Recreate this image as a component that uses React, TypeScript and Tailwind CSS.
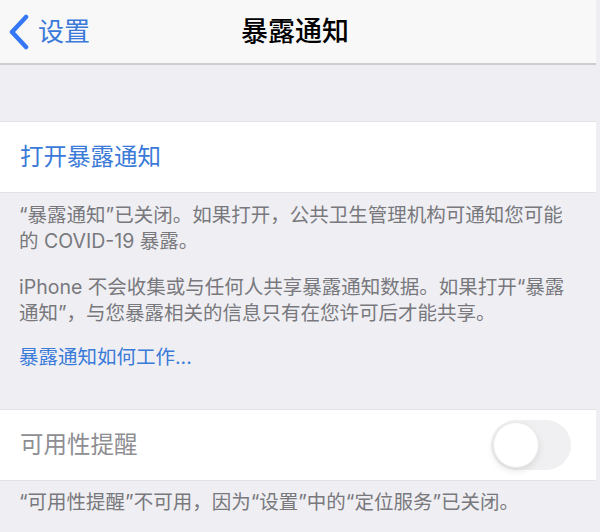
const font = {
  fontFamily: 'Inter, "Noto Sans CJK SC", sans-serif',
};

function BackChevron() {
  return (
    <svg width="22" height="36" viewBox="0 0 22 36" className="shrink-0">
      <path
        d="M18 3 L4 18 L18 33"
        fill="none"
        stroke="#3478f6"
        strokeWidth="4.5"
        strokeLinecap="round"
        strokeLinejoin="round"
      />
    </svg>
  );
}

function Toggle() {
  return (
    <div className="relative h-[50px] w-[80px] rounded-full bg-[#ededef] opacity-80">
      <div className="absolute left-[2px] top-[2px] h-[46px] w-[46px] rounded-full border border-[#e4e4e6] bg-white shadow-[0_3px_6px_rgba(0,0,0,0.12)]" />
    </div>
  );
}

export default function App() {
  return (
    <div className="h-[532px] w-[600px] overflow-hidden bg-[#efeff3]" style={font}>
      <div className="w-[596px]">
        <header className="flex h-[65px] items-center border-b-2 border-[#cdcdd1] bg-[#f8f8f9]">
          <div className="flex w-[150px] items-center pl-[8px]">
            <BackChevron />
            <span className="ml-[8px] text-[26px] leading-none text-[#3a7ad8]">设置</span>
          </div>
          <h1 className="flex-1 pr-[156px] text-center text-[27px] font-medium leading-none text-black">
            暴露通知
          </h1>
        </header>

        <div className="h-[56px]" />

        <div className="flex h-[72px] items-center border-y border-[#e3e3e7] bg-white pl-[20px]">
          <span className="text-[23.5px] leading-none text-[#3a7ad8]">打开暴露通知</span>
        </div>

        <div className="px-[19px] pt-[9px] text-[19.5px] leading-[26px] text-[#78787d]">
          <p>
            <span className="block whitespace-nowrap">“暴露通知”已关闭。如果打开，公共卫生管理机构可通知您可能</span>
            <span className="block whitespace-nowrap">的 COVID-19 暴露。</span>
          </p>
          <p className="mt-[20px]">
            <span className="block whitespace-nowrap">iPhone 不会收集或与任何人共享暴露通知数据。如果打开“暴露</span>
            <span className="block whitespace-nowrap">通知”，与您暴露相关的信息只有在您许可后才能共享。</span>
          </p>
          <p className="mt-[18px] text-[#3a7ad8]">暴露通知如何工作...</p>
        </div>

        <div className="h-[39px]" />

        <div className="flex h-[72px] items-center justify-between border-y border-[#e3e3e7] bg-white pl-[20px] pr-[25px]">
          <span className="text-[23.5px] leading-none text-[#8e8e93]">可用性提醒</span>
          <Toggle />
        </div>

        <div className="px-[19px] pt-[8px] text-[19.5px] leading-[26px] text-[#78787d]">
          <p className="whitespace-nowrap">“可用性提醒”不可用，因为“设置”中的“定位服务”已关闭。</p>
        </div>
      </div>
    </div>
  );
}
